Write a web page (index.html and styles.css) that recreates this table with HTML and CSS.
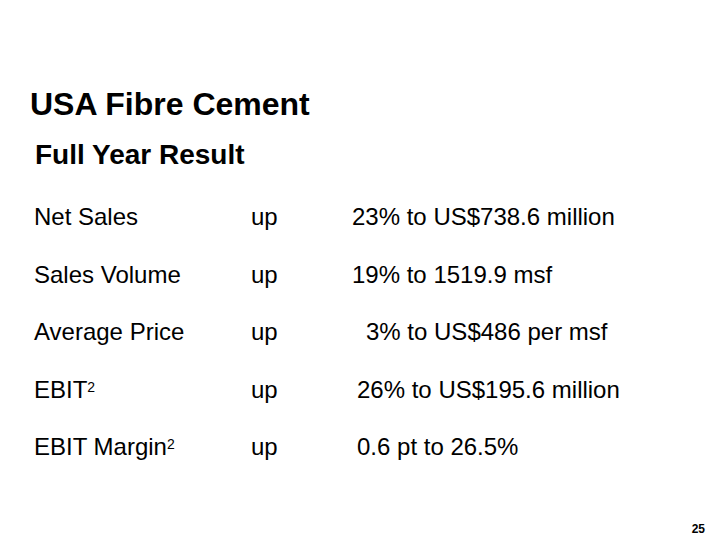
FILE: index.html
```html
<!DOCTYPE html>
<html>
<head>
<meta charset="utf-8">
<link rel="stylesheet" href="styles.css">
</head>
<body>
<div class="slide">
  <h1 class="title">USA Fibre Cement</h1>
  <h2 class="subtitle">Full Year Result</h2>
  <div class="rows">
    <div class="row"><span class="label">Net Sales</span><span class="dir">up</span><span class="val">23% to US$738.6 million</span></div>
    <div class="row"><span class="label">Sales Volume</span><span class="dir">up</span><span class="val">19% to 1519.9 msf</span></div>
    <div class="row"><span class="label">Average Price</span><span class="dir">up</span><span class="val ind2">3% to US$486 per msf</span></div>
    <div class="row"><span class="label">EBIT<sup>2</sup></span><span class="dir">up</span><span class="val ind1">26% to US$195.6 million</span></div>
    <div class="row"><span class="label">EBIT Margin<sup>2</sup></span><span class="dir">up</span><span class="val ind1">0.6 pt to 26.5%</span></div>
  </div>
  <div class="footer"><span class="page">25</span></div>
</div>
</body>
</html>
```
FILE: styles.css
```css
html, body {
  margin: 0;
  padding: 0;
  background: #ffffff;
}
.slide {
  width: 720px;
  height: 540px;
  box-sizing: border-box;
  display: flex;
  flex-direction: column;
  font-family: "Liberation Sans", Arial, sans-serif;
  color: #000;
  padding-top: 84px;
}
.title {
  margin: 0 0 0 30px;
  font-size: 32px;
  font-weight: bold;
  line-height: 40px;
}
.subtitle {
  margin: 14px 0 0 35px;
  font-size: 28px;
  font-weight: bold;
  line-height: 34px;
}
.rows {
  margin-top: 31px;
  margin-left: 34px;
  display: flex;
  flex-direction: column;
}
.row {
  display: grid;
  grid-template-columns: 217px 101px auto;
  font-size: 24px;
  height: 57.5px;
  line-height: 28px;
}
.label sup {
  font-size: 14px;
  vertical-align: top;
  line-height: 14px;
  position: relative;
  top: 4px;
}
.ind1 { padding-left: 5px; }
.ind2 { padding-left: 14px; }
.footer {
  margin-top: auto;
  display: flex;
  justify-content: flex-end;
  padding: 0 15px 4px 0;
}
.page {
  font-size: 12px;
  font-weight: bold;
  line-height: 14px;
}
```
